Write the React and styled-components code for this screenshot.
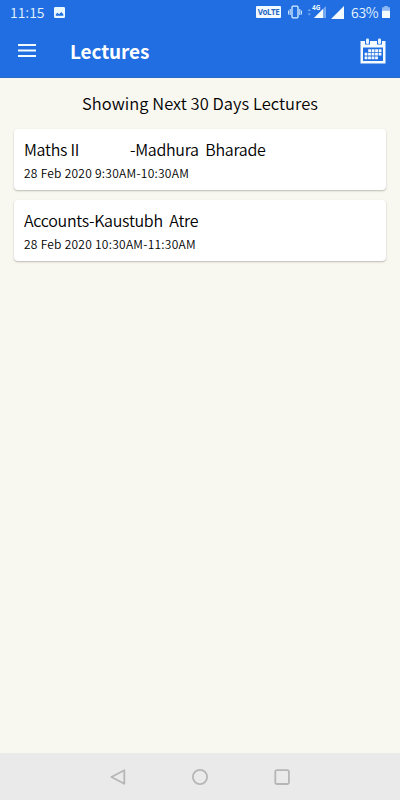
import React from 'react'
import styled, { createGlobalStyle } from 'styled-components'

const GlobalStyle = createGlobalStyle`
  * {
    box-sizing: border-box;
  }

  body {
    margin: 0;
    background: #f9f8f0;
    font-family: 'Noto Sans CJK SC', 'Noto Sans', sans-serif;
  }
`

const Screen = styled.div`
  width: 400px;
  height: 800px;
  display: flex;
  flex-direction: column;
  overflow: hidden;
  background: #f9f8f0;
`

const Header = styled.header`
  height: 78px;
  background: #206ee1;
  color: #fff;
  border-bottom: 1px solid #2a69c4;
`

const StatusBar = styled.div`
  height: 24px;
  display: flex;
  align-items: center;
  padding: 0 10px 0 10px;
  color: #e4f4ff;

  svg {
    display: block;
    flex: none;
  }
`

const StatusText = styled.span`
  width: ${(props) => props.$width}px;
  font-size: 14px;
  font-weight: 350;
  line-height: 22px;
  letter-spacing: ${(props) => props.$spacing || 0}px;
  white-space: nowrap;
`

const StatusIcons = styled.div`
  display: flex;
  align-items: center;
  margin-left: auto;
`

const Volte = styled.span`
  width: 25px;
  height: 12px;
  margin-right: 7px;
  border-radius: 1px;
  background: #f1faff;
  color: #2868c4;
  font: bold 8px/12px 'Noto Sans', sans-serif;
  letter-spacing: -0.4px;
  text-align: center;
`

//row with the menu button, page title and calendar button
const Toolbar = styled.div`
  height: 53px;
  display: flex;
  align-items: center;
  padding: 0 14px 0 18px;
`

const IconButton = styled.button`
  display: flex;
  padding: 0;
  border: none;
  background: none;
  color: #fff;
  cursor: pointer;
`

const Title = styled.h1`
  flex: 1;
  margin: 0 0 0 34px;
  font-size: 19px;
  font-weight: 700;
  line-height: 28px;
  letter-spacing: -0.1px;
`

const Content = styled.main`
  flex: 1;
  padding: 11px 14px;
  color: #000;
`

const Heading = styled.h2`
  margin: 0 0 12px;
  font-size: 16.5px;
  font-weight: 350;
  line-height: 28px;
  letter-spacing: 0.04px;
  text-align: center;
`

const Card = styled.article`
  height: 61px;
  margin-bottom: 10px;
  padding: 7px 10px;
  border-radius: 4px;
  background: #fff;
  box-shadow: 0 1px 2px rgba(0, 0, 0, 0.26);
`

const Subject = styled.div`
  display: flex;
  margin-bottom: 1px;
  font-size: 16px;
  font-weight: 350;
  line-height: 26px;
  white-space: pre;
  letter-spacing: -0.28px;
`

const Course = styled.span`
  width: ${(props) => (props.$width ? props.$width + 'px' : 'auto')};
`

const Time = styled.div`
  font-size: 12px;
  font-weight: 350;
  line-height: 20px;
  letter-spacing: 0.26px;
`

const NavBar = styled.nav`
  height: 47px;
  display: flex;
  align-items: center;
  justify-content: center;
  gap: 62px;
  background: #eaeaea;
`

const PictureIcon = () => (
  <svg width="11" height="11" viewBox="0 0 11 11">
    <rect width="11" height="11" rx="1.2" fill="#e9f7ff" />
    <path d="M1.8 8.8V7.2L3.6 5.8 5 7.2 7.4 5 9.3 7.2V8.8Z" fill="#206ee1" />
  </svg>
)

const VibrateIcon = () => (
  <svg width="14" height="14" viewBox="0 0 14 14" fill="none" stroke="#d7efff">
    <rect x="4" y="1.2" width="6" height="11.6" rx="1" strokeWidth="1.3" />
    <path d="M2.2 4v6M11.8 4v6M.6 5.5v4M13.4 5.5v4" />
  </svg>
)

const NetworkIcon = () => (
  <svg width="20" height="18" viewBox="0 0 20 18">
    <path d="M7 15 19 3V15Z" fill="#72a9f1" />
    <path d="M7 15 16 6V15Z" fill="#f3fbff" />
    <path d="M.5 8 2.2 6 4 8ZM.5 10.5 2.2 12.5 4 10.5Z" fill="#77aaf0" />
    <text x="5" y="7" fill="#e8f7ff" fontSize="6.5" fontWeight="700" fontFamily="Noto Sans">4G</text>
  </svg>
)

const SignalIcon = () => (
  <svg width="13" height="13" viewBox="0 0 13 13">
    <path d="M0 13 13 0V13Z" fill="#f3fbff" />
  </svg>
)

const BatteryIcon = () => (
  <svg width="8" height="12" viewBox="0 0 8 12">
    <path d="M2.3 0h3.4v1.2H8V12H0V1.2h2.3Z" fill="#8cb9f3" />
    <path d="M0 4.8h8V12H0Z" fill="#f3fbff" />
  </svg>
)

const MenuIcon = () => (
  <svg width="18" height="14" viewBox="0 0 18 14" fill="#f0faff">
    <path d="M0 0h18v2H0ZM0 5.5h18v2H0ZM0 11h18v2H0Z" />
  </svg>
)

const CalendarIcon = () => (
  <svg width="26" height="26" viewBox="0 0 26 26">
    <path d="M.5 3h25v22.5H.5Z" fill="#f4fbff" />
    <path d="M3 9.5h20V23H3Z" fill="#206ee1" />
    <path d="M5 2h5v4.5H5ZM17 2h5v4.5h-5Z" fill="#206ee1" />
    <rect x="6" y=".5" width="3" height="5.5" rx="1.2" fill="#e6f4ff" />
    <rect x="18" y=".5" width="3" height="5.5" rx="1.2" fill="#e6f4ff" />
    <path
      d="M8.2 12.6H21.5M4.6 16.2H21.5M4.6 19.8H18.2"
      stroke="#f4fbff"
      strokeWidth="2.8"
      strokeDasharray="2.8 .7"
    />
  </svg>
)

const BackIcon = () => (
  <svg width="20" height="20" viewBox="0 0 20 20" fill="none" stroke="#b6b6b6" strokeWidth="1.8" strokeLinejoin="round">
    <path d="M16.3 3.2V16.8L3.4 10Z" />
  </svg>
)

const HomeIcon = () => (
  <svg width="20" height="20" viewBox="0 0 20 20" fill="none" stroke="#b6b6b6" strokeWidth="1.8">
    <circle cx="10" cy="10" r="7.1" />
  </svg>
)

const RecentIcon = () => (
  <svg width="20" height="20" viewBox="0 0 20 20" fill="none" stroke="#b6b6b6" strokeWidth="1.8">
    <rect x="3.3" y="3.2" width="13.6" height="13.8" rx="1.8" />
  </svg>
)

const Spacer = styled.span`
  width: ${(props) => props.$width}px;
`

const lectures = [
  {
    course: 'Maths II',
    courseWidth: 106,
    teacher: '-Madhura  Bharade',
    time: '28 Feb 2020 9:30AM-10:30AM',
  },
  {
    course: 'Accounts',
    teacher: '-Kaustubh  Atre',
    time: '28 Feb 2020 10:30AM-11:30AM',
  },
]

export default function App() {
  return (
    <>
      <GlobalStyle />
      <Screen>
        <Header>
          <StatusBar>
            <StatusText $width={44}>11:15</StatusText>
            <PictureIcon />
            <StatusIcons>
              <Volte>VoLTE</Volte>
              <VibrateIcon />
              <Spacer $width={5} />
              <NetworkIcon />
              <Spacer $width={4} />
              <SignalIcon />
              <Spacer $width={7} />
              <StatusText $width={31} $spacing={-0.3}>63%</StatusText>
              <BatteryIcon />
            </StatusIcons>
          </StatusBar>
          <Toolbar>
            <IconButton aria-label="Menu">
              <MenuIcon />
            </IconButton>
            <Title>Lectures</Title>
            <IconButton aria-label="Calendar">
              <CalendarIcon />
            </IconButton>
          </Toolbar>
        </Header>
        <Content>
          <Heading>Showing Next 30 Days Lectures</Heading>
          {lectures.map((lecture) => (
            <Card key={lecture.course}>
              <Subject>
                <Course $width={lecture.courseWidth}>{lecture.course}</Course>
                <span>{lecture.teacher}</span>
              </Subject>
              <Time>{lecture.time}</Time>
            </Card>
          ))}
        </Content>
        <NavBar>
          <BackIcon />
          <HomeIcon />
          <RecentIcon />
        </NavBar>
      </Screen>
    </>
  )
}
